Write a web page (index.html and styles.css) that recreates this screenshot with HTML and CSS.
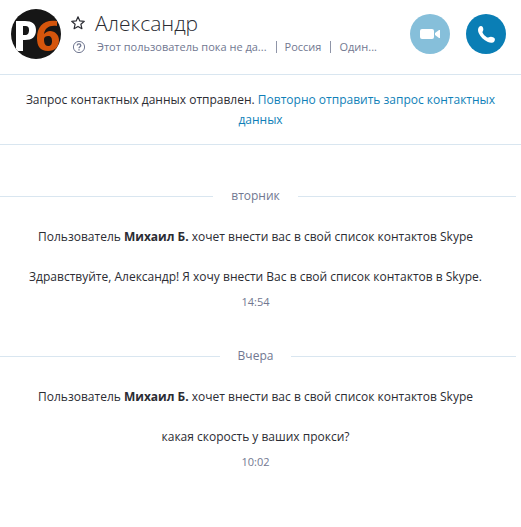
FILE: index.html
```
<!DOCTYPE html>
<html lang="ru">
<head>
    <meta charset="UTF-8">
    <meta name="viewport" content="width=device-width, initial-scale=1.0">
    <title>Александр</title>
    <link rel="stylesheet" href="styles.css">
</head>
<body>
    <header class="header">
        <svg class="avatar" viewBox="0 0 50 50" role="img" aria-label="P6">
            <defs>
                <clipPath id="avatar-clip"><circle cx="25" cy="25" r="25"/></clipPath>
            </defs>
            <g clip-path="url(#avatar-clip)">
                <rect width="50" height="50" fill="#161616"/>
                <path fill="#fff" fill-rule="evenodd" d="M5 12h9c7 0 11 3 11 9 0 7-4 10-11 10h-2v11H5zM12 17v9h2c3 0 4-2 4-5s-1-4-4-4z"/>
                <path fill="#d4550c" fill-rule="evenodd" d="M46 12v5c-8-1-12 2-13 8 2-2 4-3 6-3 5 0 9 4 9 9 0 7-4 11-11 11-8 0-11-5-11-13 0-12 7-19 20-17zM37 27c-2 0-4 1-4 3 0 4 1 7 4 7s4-2 4-5-1-5-4-5z"/>
            </g>
        </svg>
        <div class="info">
            <div class="info-row">
                <button class="icon-button" aria-label="В избранное">
                    <svg width="14" height="14" viewBox="0 0 14 14" fill="none" stroke="#2b2c33" stroke-width="1.2" stroke-linejoin="round">
                        <path d="M7 .8l1.8 4.1 4.5.4-3.4 3 1 4.4L7 10.4l-3.9 2.3 1-4.4-3.4-3 4.5-.4z"/>
                    </svg>
                </button>
                <h1>Александр</h1>
            </div>
            <div class="info-row status">
                <svg class="status-icon" width="14" height="14" viewBox="0 0 14 14" fill="none" stroke="#717891">
                    <circle cx="7" cy="7" r="5.6"/>
                    <path d="M5.2 5.6c0-2.4 3.6-2.4 3.6 0C8.8 6.8 7 6.8 7 8.2M7 9.2v1.3" stroke-width="1.3"/>
                </svg>
                <span class="mood">Этот пользователь пока не да...</span>
                <span class="place">Россия</span>
                <span class="place">Один...</span>
            </div>
        </div>
        <div class="calls">
            <button class="call video" aria-label="Видеозвонок">
                <svg width="40" height="40" viewBox="0 0 40 40" fill="#fff">
                    <rect x="10" y="15" width="14" height="10" rx="2"/>
                    <path d="M25 19l4-3h1v8h-1l-4-3z"/>
                </svg>
            </button>
            <button class="call" aria-label="Позвонить">
                <svg width="40" height="40" viewBox="0 0 40 40" fill="#fff">
                    <path d="M13 13c1-1.3 3-1.3 3.7 0 .8 1.5.9 3.2.1 4.2-.5.6-.4 1.3.1 2.1 1 1.7 2.2 2.9 3.9 3.9.8.5 1.4.5 2.1.1 1.3-.8 3-.7 4.7.2 1.7.9 1.7 2.7.5 4.2-1 1.2-3.6 1.4-6.2.3-4.3-1.8-7.5-5.2-9.2-9-1-2.3-.9-4.6.3-6z"/>
                </svg>
            </button>
        </div>
    </header>

    <p class="notice">Запрос контактных данных отправлен. <a href="#">Повторно отправить запрос контактных данных</a></p>

    <main class="chat">
        <h2 class="day">вторник</h2>
        <p>Пользователь <b>Михаил Б.</b> хочет внести вас в свой список контактов Skype</p>
        <p>Здравствуйте, Александр! Я хочу внести Вас в свой список контактов в Skype.</p>
        <time>14:54</time>

        <h2 class="day">Вчера</h2>
        <p>Пользователь <b>Михаил Б.</b> хочет внести вас в свой список контактов Skype</p>
        <p>какая скорость у ваших прокси?</p>
        <time>10:02</time>
    </main>
</body>
</html>
```

FILE: styles.css
```
* {
    box-sizing: border-box;
}
body {
    margin: 0;
    background: #fff;
    color: #2b2c33;
    font-family: "Open Sans", "Noto Sans", sans-serif;
    font-size: 12px;
    line-height: 20px;
}
button {
    padding: 0;
    border: none;
    background: none;
    cursor: pointer;
}
svg {
    display: block;
}
a {
    color: #0f7fb8;
    text-decoration: none;
}
.header {
    display: flex;
    align-items: flex-start;
    height: 75px;
    padding: 9px 15px 0 11px;
    border-bottom: 1px solid #d9e6f0;
}
.avatar {
    flex: none;
    width: 50px;
    height: 50px;
}
.info {
    flex: 1;
    min-width: 0;
    padding-left: 10px;
}
.info-row {
    display: flex;
    align-items: center;
    white-space: nowrap;
}
.icon-button {
    width: 14px;
    margin-right: 10px;
}
h1 {
    margin: 0;
    font-size: 21px;
    font-weight: 300;
    line-height: 28px;
}
.status {
    color: #717891;
    font-size: 11px;
}
.status-icon {
    margin: 0 11px 0 1px;
}
.place {
    display: flex;
    align-items: center;
}
.place::before {
    content: "";
    height: 12px;
    margin: 0 8px 0 9px;
    border-left: 1px solid #8f95a8;
}
.calls {
    display: flex;
    gap: 16px;
    padding-top: 5px;
}
.call {
    width: 40px;
    height: 40px;
    border-radius: 50%;
    background: #0a7eb5;
}
.video {
    background: #86bfda;
}
.notice {
    margin: 0;
    padding: 15px 20px 14px;
    border-bottom: 1px solid #d9e6f0;
    text-align: center;
}
/* the day lines run off the left edge and stop short of the scrollbar */
.chat {
    margin: 0 5px 0 -5px;
    padding-top: 41px;
    text-align: center;
}
.chat p {
    margin: 20px 0 0;
}
.day {
    display: flex;
    align-items: center;
    gap: 18px;
    margin: 0 0 21px;
    color: #717891;
    font-size: 12px;
    font-weight: 400;
}
.day::before,
.day::after {
    content: "";
    flex: 1;
    height: 1px;
    background: #d9e6f0;
}
.chat time {
    display: block;
    margin: 5px 0 34px;
    color: #717891;
    font-size: 11px;
}
```
